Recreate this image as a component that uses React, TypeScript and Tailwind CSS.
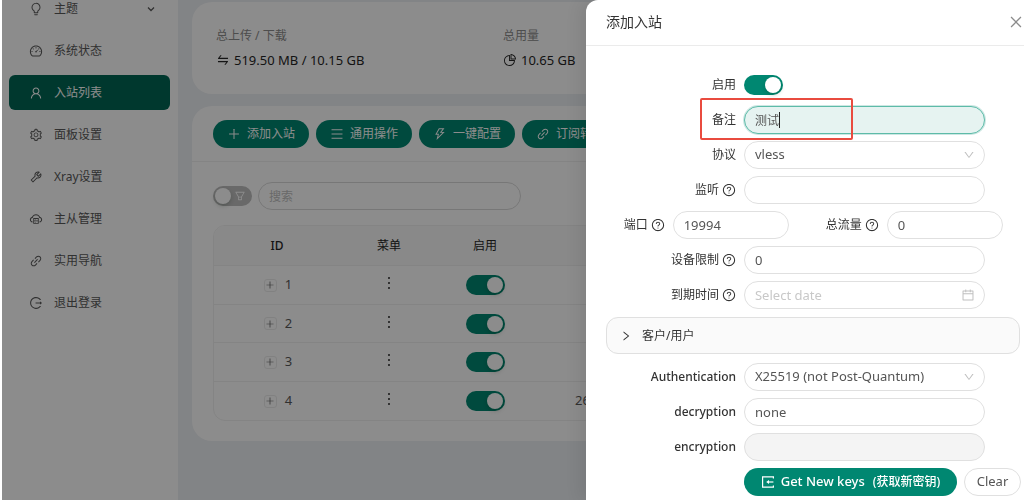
import React, { useState } from "react";
import {
  AiOutlineBulb,
  AiOutlineCalendar,
  AiOutlineClose,
  AiOutlineCloudServer,
  AiOutlineDashboard,
  AiOutlineDown,
  AiOutlineFilter,
  AiOutlineLink,
  AiOutlineLogout,
  AiOutlineMenu,
  AiOutlineMore,
  AiOutlinePieChart,
  AiOutlinePlus,
  AiOutlineQuestionCircle,
  AiOutlineRight,
  AiOutlineSetting,
  AiOutlineSwap,
  AiOutlineThunderbolt,
  AiOutlineTool,
  AiOutlineUser,
} from "react-icons/ai";

type Icon = React.ComponentType<{ className?: string }>;

const navItems: { label: string; icon: Icon; active?: boolean; expandable?: boolean }[] = [
  { label: "主题", icon: AiOutlineBulb, expandable: true },
  { label: "系统状态", icon: AiOutlineDashboard },
  { label: "入站列表", icon: AiOutlineUser, active: true },
  { label: "面板设置", icon: AiOutlineSetting },
  { label: "Xray设置", icon: AiOutlineTool },
  { label: "主从管理", icon: AiOutlineCloudServer },
  { label: "实用导航", icon: AiOutlineLink },
  { label: "退出登录", icon: AiOutlineLogout },
];

const actions: { label: string; icon: Icon }[] = [
  { label: "添加入站", icon: AiOutlinePlus },
  { label: "通用操作", icon: AiOutlineMenu },
  { label: "一键配置", icon: AiOutlineThunderbolt },
  { label: "订阅转换", icon: AiOutlineLink },
];

const rows = [
  { id: 1, port: "" },
  { id: 2, port: "" },
  { id: 3, port: "" },
  { id: 4, port: "26" },
];

const inputClass =
  "h-7 w-full rounded-full border border-[#e0e0e0] bg-white px-2.5 text-[13px] text-[#555] outline-none placeholder:text-[#c8c8c8]";

function ImportIcon({ className }: { className?: string }) {
  return (
    <svg viewBox="0 0 14 14" className={className} fill="none" stroke="currentColor" strokeWidth="1.2" aria-hidden="true">
      <path d="M12.4 3.4V1.8H1.6v10.4h10.8v-1.6" />
      <path d="M12.4 7H7" />
      <path d="M8 4.9 5.2 7 8 9.1z" fill="currentColor" stroke="none" />
    </svg>
  );
}

function Switch({ id, label, on = true }: { id?: string; label?: string; on?: boolean }) {
  return (
    <input
      id={id}
      aria-label={label}
      type="checkbox"
      role="switch"
      defaultChecked={on}
      className="relative block h-5 w-[39px] shrink-0 cursor-pointer appearance-none rounded-full bg-[#bfbfbf] before:absolute before:top-0.5 before:left-0.5 before:size-4 before:rounded-full before:bg-white before:shadow-[0_2px_4px_rgba(0,35,11,0.2)] checked:bg-[#008771] checked:before:left-[21px]"
    />
  );
}

function Field({
  label,
  htmlFor,
  help,
  children,
}: {
  label: string;
  htmlFor: string;
  help?: boolean;
  children: React.ReactNode;
}) {
  return (
    <div className="flex h-7 items-center">
      <label
        htmlFor={htmlFor}
        className="flex w-1/3 shrink-0 items-center justify-end gap-[3px] pr-2 text-[12px] whitespace-nowrap text-[#333]"
      >
        {/^[a-z]/i.test(label) ? <span className="font-medium">{label}</span> : label}
        {help && <AiOutlineQuestionCircle className="size-3.5 shrink-0" />}
      </label>
      <div className="w-7/12">{children}</div>
    </div>
  );
}

function Select({ id, value }: { id: string; value: string }) {
  return (
    <div className="relative">
      <select id={id} className={`${inputClass} appearance-none`} defaultValue={value}>
        <option>{value}</option>
      </select>
      <AiOutlineDown className="pointer-events-none absolute top-2 right-2.5 size-3 text-[#bfbfbf]" />
    </div>
  );
}

function Sidebar() {
  return (
    <aside className="w-44 shrink-0 overflow-hidden bg-white pr-2 pl-[7px]">
      <nav className="-mt-[9px] flex flex-col gap-[7px]">
        {navItems.map(({ label, icon: ItemIcon, active, expandable }) => (
          <a
            key={label}
            href="#"
            className={`flex h-[35px] items-center gap-[11px] rounded-md pr-[15px] pl-5 text-[12px] ${
              active ? "bg-[#006654] text-white" : "text-[#595959]"
            }`}
          >
            <ItemIcon className="size-3.5" />
            <span className="flex-1">{label}</span>
            {expandable && (
              <svg viewBox="0 0 8 8" className="size-2" fill="none" stroke="currentColor" strokeWidth="1.3" aria-hidden="true">
                <path d="M1 2.5 4 5.5 7 2.5" />
              </svg>
            )}
          </a>
        ))}
      </nav>
    </aside>
  );
}

function InboundTable() {
  return (
    <div className="mt-[15px] overflow-hidden rounded-xl border border-[#f0f0f0]">
      <table className="w-full table-fixed border-separate border-spacing-0 text-center text-[13px] text-[#595959]">
        <thead>
          <tr className="h-10 bg-[#fafafa] text-[12px] text-[#262626]">
            <th className="w-[126px] border-b border-[#f0f0f0] font-medium">ID</th>
            <th className="w-[98px] border-b border-[#f0f0f0] font-normal">菜单</th>
            <th className="w-[94px] border-b border-[#f0f0f0] font-normal">启用</th>
            <th className="border-b border-[#f0f0f0]" />
          </tr>
        </thead>
        <tbody>
          {rows.map((row) => (
            <tr key={row.id} className="h-[38px] odd:h-[39px] [&:not(:last-child)>td]:border-b [&>td]:border-[#f0f0f0] [&>td]:p-0">
              <td>
                <div className="flex items-center justify-center gap-2 pl-0.5">
                  <button
                    type="button"
                    aria-label={`+ ${row.id}`}
                    className="flex size-[13px] items-center justify-center rounded-[3px] border border-[#ececec]"
                  >
                    <AiOutlinePlus className="size-2.5 shrink-0" />
                  </button>
                  <span>{row.id}</span>
                </div>
              </td>
              <td>
                <AiOutlineMore className="mx-auto mb-1 size-[18px] text-[#262626]" />
              </td>
              <td>
                <div className="flex justify-center">
                  <Switch label={`启用 ${row.id}`} />
                </div>
              </td>
              <td className="text-left">
                <span className="ml-[43px]">{row.port}</span>
              </td>
            </tr>
          ))}
        </tbody>
      </table>
    </div>
  );
}

function Dashboard() {
  return (
    <main className="flex min-w-0 flex-1 flex-col gap-3 bg-[#edf0f4] pt-0.5 pr-3.5 pl-3.5">
      <section className="flex h-[92px] items-center rounded-[20px] bg-white px-6 pt-1">
        <div className="w-[287px]">
          <div className="text-[12px] leading-5 text-[#8c8c8c]">总上传 / 下载</div>
          <div className="flex items-center gap-1 text-[13px] leading-7 text-[#262626]">
            <AiOutlineSwap className="size-3.5" />
            519.50 MB / 10.15 GB
          </div>
        </div>
        <div>
          <div className="text-[12px] leading-5 text-[#8c8c8c]">总用量</div>
          <div className="flex items-center gap-1 text-[13px] leading-7 text-[#262626]">
            <AiOutlinePieChart className="size-3.5" />
            10.65 GB
          </div>
        </div>
      </section>

      <section className="overflow-hidden rounded-[20px] bg-white">
        <header className="flex h-14 items-center gap-[7px] border-b border-[#f0f0f0] px-[21px]">
          {actions.map(({ label, icon: ActionIcon }) => (
            <button
              key={label}
              type="button"
              className="flex h-7 w-24 shrink-0 items-center justify-center gap-1.5 rounded-full bg-[#008771] text-[12px] whitespace-nowrap text-white"
            >
              <ActionIcon className="size-3.5" />
              {label}
            </button>
          ))}
        </header>
        <div className="px-[21px] py-5">
          <div className="flex items-center gap-1.5">
            <div className="relative">
              <Switch label="筛选" on={false} />
              <AiOutlineFilter className="pointer-events-none absolute top-1 right-1.5 size-3 text-white" />
            </div>
            <input
              type="text"
              aria-label="搜索"
              placeholder="搜索"
              className="h-7 w-[263px] rounded-full border border-[#d9d9d9] bg-white px-2.5 text-[12px] outline-none placeholder:text-[#bfbfbf]"
            />
          </div>
          <InboundTable />
        </div>
      </section>
    </main>
  );
}

function InboundDrawer() {
  const [remark, setRemark] = useState("测试");
  return (
    <aside className="fixed inset-y-0 right-0 flex w-[438px] flex-col overflow-hidden rounded-tl-xl bg-white shadow-[-6px_0_16px_rgba(0,0,0,0.08)]">
      <header className="flex h-[46px] shrink-0 items-center justify-between border-b border-[#ebebeb] pb-0.5 pl-5">
        <h2 className="text-[14px] text-[#333]">添加入站</h2>
        <button type="button" aria-label="Close" className="text-[#8c8c8c]">
          <AiOutlineClose className="size-4" />
        </button>
      </header>
      <form className="flex flex-col gap-[7px] pt-[25px] pr-1 pl-5">
        <Field label="启用" htmlFor="enable">
          <Switch id="enable" />
        </Field>
        <div className="relative">
          <Field label="备注" htmlFor="remark">
            <div className="relative">
              <input
                id="remark"
                type="text"
                value={remark}
                onChange={(e) => setRemark(e.target.value)}
                className="h-7 w-full rounded-full border border-[#5dbba8] bg-[#e6f3f1] px-2.5 text-[12px] text-[#555] shadow-[0_0_0_1px_rgba(0,135,113,0.2)] outline-none"
              />
              <span className="absolute top-1.5 left-[35px] h-4 w-px bg-[#222]" />
            </div>
          </Field>
          <div className="pointer-events-none absolute -top-2 left-[94px] h-[42px] w-[153px] rounded-xs border-2 border-[#e94b3f]" />
        </div>
        <Field label="协议" htmlFor="protocol">
          <Select id="protocol" value="vless" />
        </Field>
        <Field label="监听" htmlFor="listen" help>
          <input id="listen" type="text" className={inputClass} />
        </Field>
        <div className="grid grid-cols-2 gap-3.5">
          <Field label="端口" htmlFor="port" help>
            <input id="port" type="text" defaultValue="19994" className={inputClass} />
          </Field>
          <Field label="总流量" htmlFor="traffic" help>
            <input id="traffic" type="text" defaultValue="0" className={inputClass} />
          </Field>
        </div>
        <Field label="设备限制" htmlFor="devices" help>
          <input id="devices" type="text" defaultValue="0" className={inputClass} />
        </Field>
        <Field label="到期时间" htmlFor="expiry" help>
          <div className="relative">
            <input id="expiry" type="text" placeholder="Select date" className={inputClass} />
            <AiOutlineCalendar className="pointer-events-none absolute top-[7px] right-2.5 size-3.5 text-[#bfbfbf]" />
          </div>
        </Field>
        <button
          type="button"
          className="mt-px mb-0.5 flex h-[37px] shrink-0 items-center gap-2.5 rounded-xl border border-[#e0e0e0] bg-[#fafafa] px-[13px] text-[12px] text-[#333]"
        >
          <AiOutlineRight className="size-3" />
          客户/用户
        </button>
        <Field label="Authentication" htmlFor="auth">
          <Select id="auth" value="X25519 (not Post-Quantum)" />
        </Field>
        <Field label="decryption" htmlFor="decryption">
          <input id="decryption" type="text" defaultValue="none" className={inputClass} />
        </Field>
        <Field label="encryption" htmlFor="encryption">
          <input
            id="encryption"
            type="text"
            disabled
            className="h-7 w-full rounded-full border border-[#e0e0e0] bg-[#f4f4f4] px-2.5 text-[13px]"
          />
        </Field>
        <div className="flex gap-[7px] pl-[33.333%] whitespace-nowrap">
          <button
            type="button"
            className="flex h-7 w-[213px] shrink-0 items-center justify-center gap-1.5 rounded-full bg-[#008771] text-[12px] text-white"
          >
            <ImportIcon className="size-3.5" />
            <span className="flex items-center gap-2">
              <span className="text-[13px] font-medium">Get New keys</span>
              <span className="font-medium">(获取新密钥)</span>
            </span>
          </button>
          <button
            type="button"
            className="h-7 w-[57px] shrink-0 rounded-full border border-[#e0e0e0] bg-white text-[13px] text-[#555]"
          >
            Clear
          </button>
        </div>
      </form>
    </aside>
  );
}

export default function App() {
  return (
    <div className="h-screen overflow-hidden bg-white pl-0.5 font-['Noto_Sans','Noto_Sans_CJK_SC',sans-serif]">
      <div className="relative flex h-full">
        <Sidebar />
        <Dashboard />
        <div className="absolute inset-0 bg-black/45" />
      </div>
      <InboundDrawer />
    </div>
  );
}
